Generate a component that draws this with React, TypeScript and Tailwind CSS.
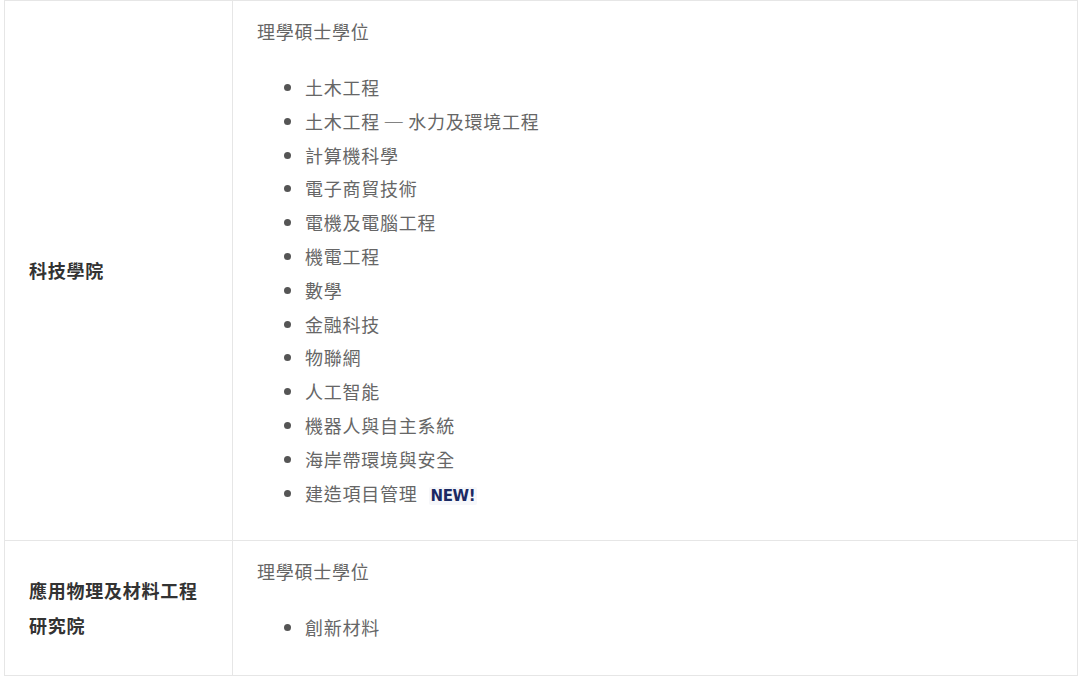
const font = '[font-family:"Noto_Sans_CJK_TC","Noto_Sans",sans-serif]';

interface Row {
  school: string[];
  degree: string;
  programmes: { name: string; isNew?: boolean }[];
}

const rows: Row[] = [
  {
    school: ['科技學院'],
    degree: '理學碩士學位',
    programmes: [
      { name: '土木工程' },
      { name: '土木工程 ─ 水力及環境工程' },
      { name: '計算機科學' },
      { name: '電子商貿技術' },
      { name: '電機及電腦工程' },
      { name: '機電工程' },
      { name: '數學' },
      { name: '金融科技' },
      { name: '物聯網' },
      { name: '人工智能' },
      { name: '機器人與自主系統' },
      { name: '海岸帶環境與安全' },
      { name: '建造項目管理', isNew: true },
    ],
  },
  {
    school: ['應用物理及材料工程', '研究院'],
    degree: '理學碩士學位',
    programmes: [{ name: '創新材料' }],
  },
];

function NewBadge() {
  return (
    <span className="ml-[11px] inline-block align-middle rounded-[2px] bg-[#f6f7fa] px-[2px] text-[15px] leading-[18px] font-black tracking-[-0.4px] text-[#1b2a63] [font-family:'DejaVu_Sans','Liberation_Sans',sans-serif]">
      NEW!
    </span>
  );
}

export default function App() {
  return (
    <div className={`min-h-[679px] bg-white pl-[4px] pr-[2px] ${font}`}>
      <table className="w-[1074px] border-collapse">
        <tbody>
          {rows.map((row, i) => (
            <tr key={i}>
              <td className="w-[228px] border border-[#e6e6e6] px-[24px] align-middle text-[18px] leading-[35px] font-bold tracking-[0.75px] text-[#333333]">
                {row.school.map(line => (
                  <div key={line}>{line}</div>
                ))}
              </td>
              <td className="border border-[#e6e6e6] px-[24px] py-[13px] align-top text-[18px] tracking-[0.75px] text-[#666666]">
                <p className="leading-[34px]">{row.degree}</p>
                <ul className="mt-[23px] mb-[17px] pl-[48px] list-disc marker:text-[#555555]">
                  {row.programmes.map(p => (
                    <li key={p.name} className="leading-[33.8px]">
                      {p.name}
                      {p.isNew && <NewBadge />}
                    </li>
                  ))}
                </ul>
              </td>
            </tr>
          ))}
        </tbody>
      </table>
    </div>
  );
}
